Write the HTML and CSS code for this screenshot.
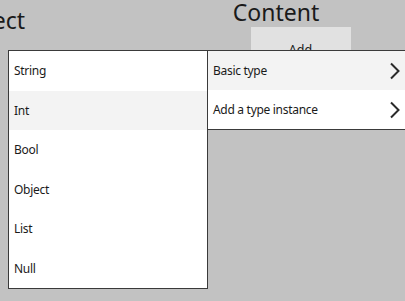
FILE: index.html
```html
<!DOCTYPE html>
<html>
<head>
  <meta charset="UTF-8">
  <title>Type menu</title>
  <link rel="stylesheet" href="styles.css">
</head>
<body>
  <div class="columns">
    <div class="column object-col">
      <h2>Object</h2>
    </div>
    <div class="column content-col">
      <h2>Content</h2>
      <button class="add-btn" type="button">Add</button>
    </div>
  </div>

  <ul class="menu main-menu">
    <li class="menu-item">String</li>
    <li class="menu-item hover">Int</li>
    <li class="menu-item">Bool</li>
    <li class="menu-item">Object</li>
    <li class="menu-item">List</li>
    <li class="menu-item">Null</li>
  </ul>

  <ul class="menu sub-menu">
    <li class="menu-item hover">
      <span>Basic type</span>
      <svg class="chevron" width="12" height="18" viewBox="0 0 12 18"><path d="M2 1.5 L9.5 9 L2 16.5" /></svg>
    </li>
    <li class="menu-item">
      <span>Add a type instance</span>
      <svg class="chevron" width="12" height="18" viewBox="0 0 12 18"><path d="M2 1.5 L9.5 9 L2 16.5" /></svg>
    </li>
  </ul>
</body>
</html>
```

FILE: styles.css
```css
body {
  font-family: "Noto Sans", "Open Sans", sans-serif;
  background-color: #c2c2c2;
  margin: 0;
  padding: 0;
  overflow: hidden;
  color: #1a1a1a;
}

.columns {
  display: flex;
  margin-left: -110px;
}

.column {
  display: flex;
  flex-direction: column;
  align-items: center;
  flex-shrink: 0;
  width: 200px;
}

.column h2 {
  font-weight: normal;
  font-size: 23px;
  margin: 0;
  line-height: 28px;
}

.object-col {
  padding-top: 6px;
}

.content-col {
  margin-left: 86px;
  margin-top: -2px;
}

.add-btn {
  width: 100px;
  height: 34px;
  margin-top: 1px;
  margin-left: 49px;
  border: none;
  background-color: #e1e1e1;
  font-family: "Noto Sans", sans-serif;
  font-size: 12.5px;
  color: #1a1a1a;
  padding-top: 12px;
}

.menu {
  position: absolute;
  top: 50px;
  list-style: none;
  margin: 0;
  padding: 0;
  background-color: #fff;
  border: 1px solid #3a3a3a;
}

.main-menu {
  left: 8px;
  width: 198px;
}

.sub-menu {
  left: 207px;
  width: 210px;
}

.menu-item {
  height: 39.5px;
  display: flex;
  align-items: center;
  justify-content: space-between;
  padding: 0 5px;
  font-size: 12px;
  letter-spacing: -0.3px;
}

.sub-menu .menu-item {
  height: 39px;
}

.menu-item.hover {
  background-color: #f3f3f3;
}

.chevron {
  margin-right: 12px;
}

.chevron path {
  fill: none;
  stroke: #2a2a2a;
  stroke-width: 2;
}
```
